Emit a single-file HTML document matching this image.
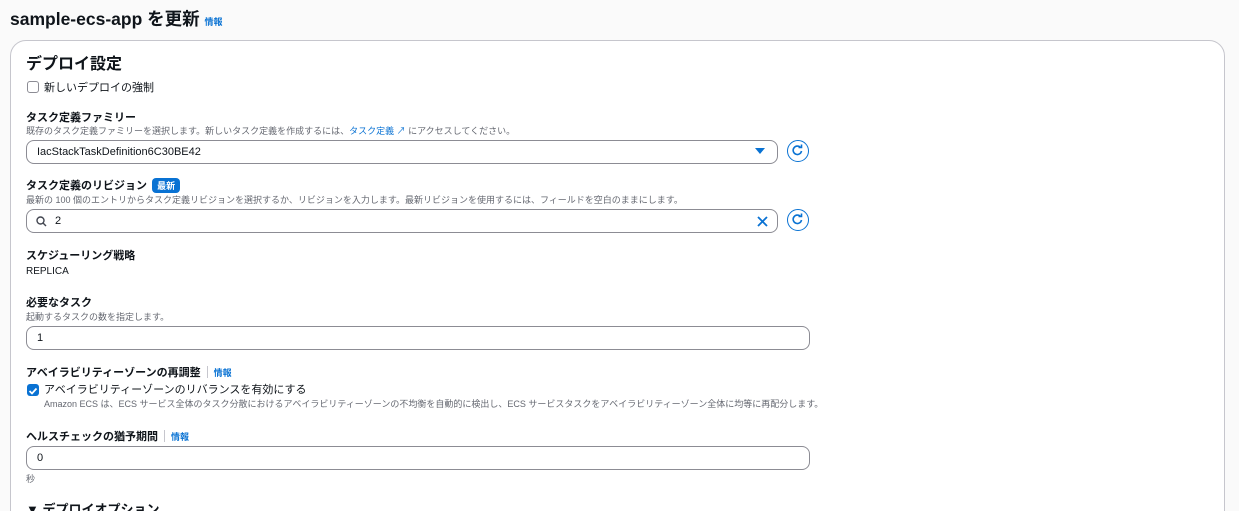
<!DOCTYPE html>
<html><head><meta charset="utf-8"><style>
*{box-sizing:border-box;margin:0;padding:0}
html,body{width:1239px;height:511px;overflow:hidden}
body{background:#fafafa;font-family:"Liberation Sans","Noto Sans CJK JP",sans-serif;color:#0f141a;position:relative}
.a{position:absolute;white-space:nowrap}
.card{position:absolute;left:10px;top:40px;width:1215px;height:500px;background:#fff;border:1px solid #c6c6cd;border-radius:16px}
.lbl{font-size:11px;font-weight:bold}
.desc{font-size:9px;color:#656871}
.inp{position:absolute;left:26px;border:1px solid #8c8c94;border-radius:8px;height:24px;background:#fff;font-size:11px;padding:5px 10px}
.link{color:#0972d3;font-size:9px;font-weight:bold}
.sep{display:inline-block;width:1px;height:12px;background:#c6c6cd;margin:0 6px;vertical-align:-2px}
.ref{position:absolute;width:22px;height:22px;border:1.5px solid #0972d3;border-radius:50%}
</style></head><body>
<div class="a" style="left:10px;top:6px;font-size:17.5px;font-weight:bold">sample-ecs-app を更新 <span class="link" style="font-size:9px">情報</span></div>
<div class="card"></div>
<div class="a" style="left:26px;top:50px;font-size:16px;font-weight:bold">デプロイ設定</div>
<div class="a" style="left:27px;top:81px;width:12px;height:12px;border:1px solid #8c8c94;border-radius:3px"></div>
<div class="a" style="left:44px;top:79px;font-size:11px">新しいデプロイの強制</div>
<div class="a lbl" style="left:26px;top:109px">タスク定義ファミリー</div>
<div class="a desc" style="left:26px;top:124px">既存のタスク定義ファミリーを選択します。新しいタスク定義を作成するには、<span class="link" style="font-weight:normal">タスク定義 ↗</span> にアクセスしてください。</div>
<div class="inp" style="top:140px;width:752px">IacStackTaskDefinition6C30BE42<span style="position:absolute;right:12px;top:7px;border-left:5px solid transparent;border-right:5px solid transparent;border-top:6px solid #0972d3"></span></div>
<div class="ref" style="left:787px;top:140px"><svg width="19" height="19" viewBox="0 0 19 19"><path d="M12.5 6.5A4.2 4.2 0 1 0 13.5 10" fill="none" stroke="#0972d3" stroke-width="1.6"/><path d="M10.5 6.5h3v-3" fill="none" stroke="#0972d3" stroke-width="1.6"/></svg></div>
<div class="a lbl" style="left:26px;top:177px">タスク定義のリビジョン <span style="display:inline-block;background:#0972d3;color:#fff;font-size:9px;padding:1px 5px;border-radius:4px;margin-left:2px">最新</span></div>
<div class="a desc" style="left:26px;top:193px">最新の 100 個のエントリからタスク定義リビジョンを選択するか、リビジョンを入力します。最新リビジョンを使用するには、フィールドを空白のままにします。</div>
<div class="inp" style="top:209px;width:752px;padding-left:28px"><svg style="position:absolute;left:9px;top:6px" width="11" height="11" viewBox="0 0 11 11"><circle cx="4.5" cy="4.5" r="3.5" fill="none" stroke="#424650" stroke-width="1.4"/><path d="M7 7l3 3" stroke="#424650" stroke-width="1.4"/></svg>2<svg style="position:absolute;right:9px;top:6px" width="11" height="11" viewBox="0 0 11 11"><path d="M1 1l9 9M10 1l-9 9" stroke="#0972d3" stroke-width="1.8"/></svg></div>
<div class="ref" style="left:787px;top:209px"><svg width="19" height="19" viewBox="0 0 19 19"><path d="M12.5 6.5A4.2 4.2 0 1 0 13.5 10" fill="none" stroke="#0972d3" stroke-width="1.6"/><path d="M10.5 6.5h3v-3" fill="none" stroke="#0972d3" stroke-width="1.6"/></svg></div>
<div class="a lbl" style="left:26px;top:247px">スケジューリング戦略</div>
<div class="a" style="left:26px;top:266px;font-size:10px">REPLICA</div>
<div class="a lbl" style="left:26px;top:294px">必要なタスク</div>
<div class="a desc" style="left:26px;top:310px">起動するタスクの数を指定します。</div>
<div class="inp" style="top:326px;width:784px">1</div>
<div class="a lbl" style="left:26px;top:364px">アベイラビリティーゾーンの再調整<span class="sep"></span><span class="link">情報</span></div>
<div class="a" style="left:27px;top:384px;width:12px;height:12px;background:#0972d3;border-radius:3px"><svg width="12" height="12" viewBox="0 0 12 12"><path d="M2.5 6l2.5 2.5 4.5-5" fill="none" stroke="#fff" stroke-width="1.8"/></svg></div>
<div class="a" style="left:44px;top:381px;font-size:11px">アベイラビリティーゾーンのリバランスを有効にする</div>
<div class="a desc" style="left:44px;top:397px">Amazon ECS は、ECS サービス全体のタスク分散におけるアベイラビリティーゾーンの不均衡を自動的に検出し、ECS サービスタスクをアベイラビリティーゾーン全体に均等に再配分します。</div>
<div class="a lbl" style="left:26px;top:428px">ヘルスチェックの猶予期間<span class="sep"></span><span class="link">情報</span></div>
<div class="inp" style="top:446px;width:784px">0</div>
<div class="a desc" style="left:26px;top:472px">秒</div>
<div class="a" style="left:26px;top:499px;font-size:13px;font-weight:bold">▼ デプロイオプション</div>
</body></html>
